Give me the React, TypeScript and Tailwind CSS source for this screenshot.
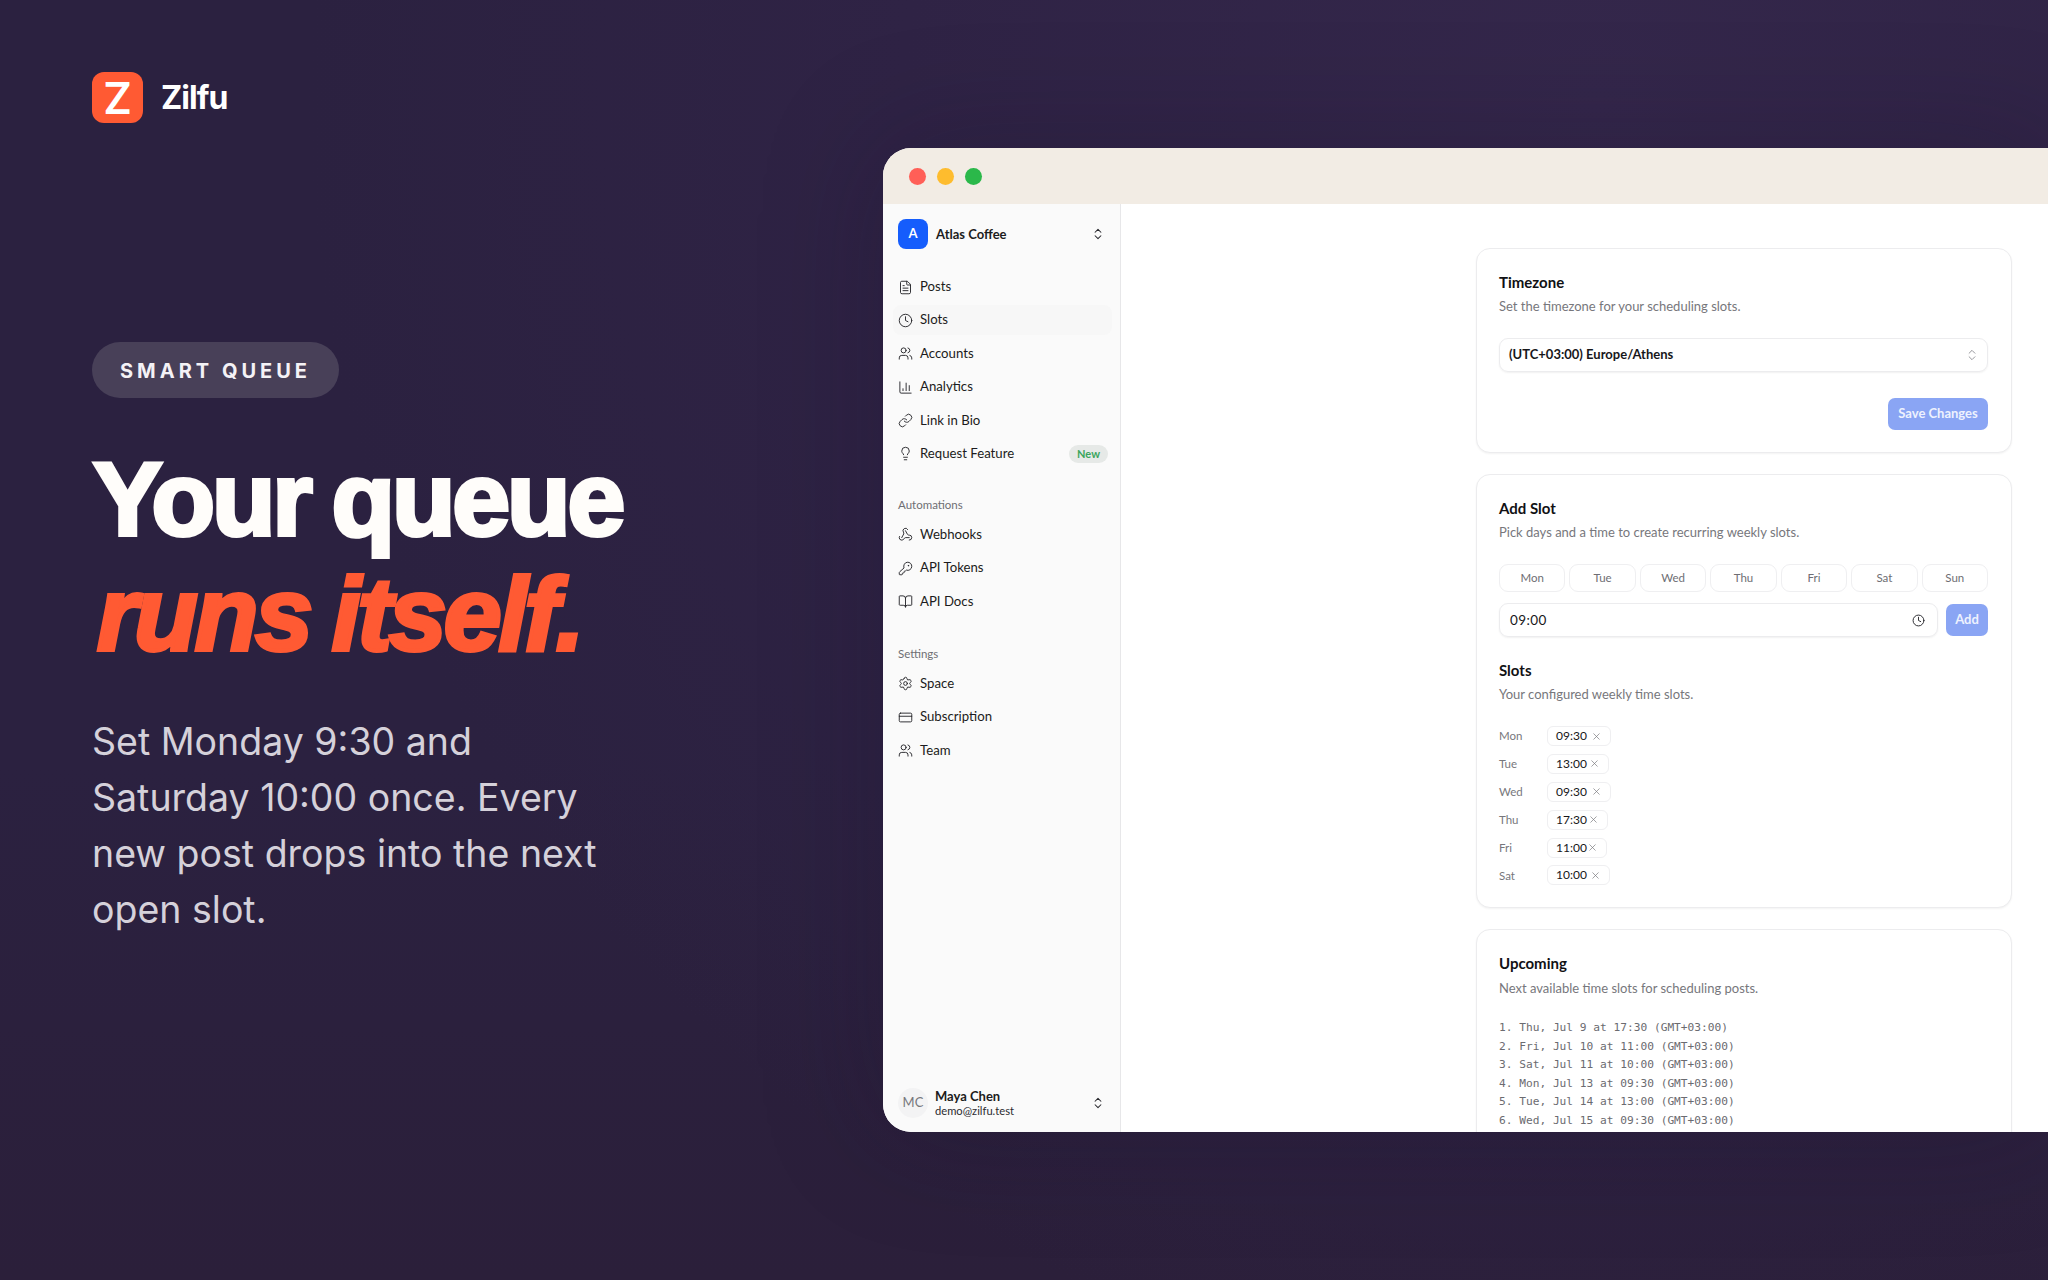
import { BookOpen, ChartColumn, ChevronsUpDown, Clock, CreditCard, FileText, KeyRound, Lightbulb, Link as LinkIcon, Settings, Users, Webhook, X } from "lucide-react";
import type { ComponentType, ReactNode } from "react";

type IconT = ComponentType<{ className?: string; strokeWidth?: number }>;

function NavRow({ icon: Icon, label, active, badge }: { icon: IconT; label: string; active?: boolean; badge?: string }) {
  return (
    <div className={`flex h-[30px] items-center rounded-lg pl-[5px] pr-[4px] ${active ? "bg-[#f7f7f7]" : ""}`}>
      <Icon className="mr-[7px] size-[15px] shrink-0 text-[#26262b]" strokeWidth={1.5} />
      <span className="text-[13.2px] text-[#1c1c20]">{label}</span>
      {badge && (
        <span className="ml-auto flex h-[18px] items-center rounded-full bg-[#e6e9e7] px-[8px] text-[11px] font-bold text-[#3ba55d]">{badge}</span>
      )}
    </div>
  );
}

function GroupLabel({ children }: { children: ReactNode }) {
  return <div className="mb-[7px] flex h-[16px] items-center pl-[5px] text-[11.5px] text-[#6e6e73]">{children}</div>;
}

function CardHead({ title, desc }: { title: string; desc: string }) {
  return (
    <>
      <div className="flex h-[20px] items-center pb-[2px] text-[15px] font-bold text-[#111114]">{title}</div>
      <div className="mt-[5px] flex h-[18px] items-center text-[13px] text-[#77777c]">{desc}</div>
    </>
  );
}

const days = ["Mon", "Tue", "Wed", "Thu", "Fri", "Sat", "Sun"];
const slots: [string, string, string][] = [
  ["Mon", "09:30", "w-[64px]"],
  ["Tue", "13:00", "w-[61.5px]"],
  ["Wed", "09:30", "w-[64px]"],
  ["Thu", "17:30", "w-[60.5px]"],
  ["Fri", "11:00", "w-[60px]"],
  ["Sat", "10:00", "w-[63px]"],
];
const upcoming = [
  "1. Thu, Jul 9 at 17:30 (GMT+03:00)",
  "2. Fri, Jul 10 at 11:00 (GMT+03:00)",
  "3. Sat, Jul 11 at 10:00 (GMT+03:00)",
  "4. Mon, Jul 13 at 09:30 (GMT+03:00)",
  "5. Tue, Jul 14 at 13:00 (GMT+03:00)",
  "6. Wed, Jul 15 at 09:30 (GMT+03:00)",
];

export default function App() {
  return (
    <div className="flex h-[1280px] w-[2048px] overflow-hidden bg-[#2b2140] bg-[radial-gradient(circle_at_78%_8%,#34274b_0%,#2f2345_35%,rgba(43,33,64,0)_65%),linear-gradient(180deg,#2b2140_0%,#2b2140_60%,#2b1f3a_100%)] font-['Lato',sans-serif]">
      {/* left column */}
      <div className="flex w-[883px] shrink-0 flex-col pl-[92px] pt-[72px]">
        <div className="flex items-center gap-[18px]">
          <div className="flex size-[51px] items-center justify-center rounded-[12px] bg-[#ff5a33] font-['Inter',sans-serif] text-[44px] font-semibold leading-none text-white">Z</div>
          <div className="font-['Inter',sans-serif] text-[32px] font-bold tracking-[-0.03em] text-white">Zilfu</div>
        </div>
        <div className="mt-[219px] flex h-[56px] w-[247px] items-center justify-center rounded-full bg-[#484058] pt-[2px] font-['Inter',sans-serif] text-[20px] font-bold tracking-[0.2em] text-[#f4f2f6]">SMART QUEUE</div>
        <h1 className="mt-[44px] pl-[1px] font-['Liberation_Sans',sans-serif] text-[104px] font-bold leading-[115px] tracking-[-0.03em] text-[#fffdfa] [word-spacing:-4px] [-webkit-text-stroke:4px_currentColor]">
          <div>Your queue</div>
          <div className="pl-[4px] italic text-[#ff5a33]">runs itself.</div>
        </h1>
        <p className="mt-[42px] w-[600px] font-['Inter',sans-serif] text-[37.5px] leading-[56px] text-[#d5d1da]">
          Set Monday 9:30 and
          <br />
          Saturday 10:00 once. Every
          <br />
          new post drops into the next
          <br />
          open slot.
        </p>
      </div>

      {/* app window */}
      <div className="mt-[148px] flex h-[984px] flex-1 flex-col overflow-hidden rounded-l-[28px] bg-white shadow-[0_0_120px_rgba(20,12,35,0.25)]">
        <div className="flex h-[56px] shrink-0 items-center gap-[11px] bg-[#f2ece4] pl-[26px]">
          <span className="size-[17px] rounded-full bg-[#ff5f57]" />
          <span className="size-[17px] rounded-full bg-[#febc2e]" />
          <span className="size-[17px] rounded-full bg-[#2bb84a]" />
        </div>
        <div className="flex min-h-0 flex-1">
          {/* sidebar */}
          <div className="flex w-[238px] shrink-0 flex-col border-r border-[#e7e7e9] bg-[#fafafa] pb-[14px] pl-[10px] pr-[8px] pt-[15px]">
            <div className="flex items-center pl-[5px] pr-[6px]">
              <div className="flex size-[30px] items-center justify-center rounded-[8px] bg-[#155dfc] text-[13px] font-bold text-white">A</div>
              <div className="ml-[8px] pt-[2px] text-[13px] font-bold text-[#1c1c20]">Atlas Coffee</div>
              <ChevronsUpDown className="ml-auto mr-[1px] size-[14px] text-[#26262b]" strokeWidth={1.75} />
            </div>
            <div className="mt-[23px] flex flex-col gap-[3.4px]">
              <NavRow icon={FileText} label="Posts" />
              <NavRow icon={Clock} label="Slots" active />
              <NavRow icon={Users} label="Accounts" />
              <NavRow icon={ChartColumn} label="Analytics" />
              <NavRow icon={LinkIcon} label="Link in Bio" />
              <NavRow icon={Lightbulb} label="Request Feature" badge="New" />
            </div>
            <div className="mt-[28px]"><GroupLabel>Automations</GroupLabel></div>
            <div className="flex flex-col gap-[3.4px]">
              <NavRow icon={Webhook} label="Webhooks" />
              <NavRow icon={KeyRound} label="API Tokens" />
              <NavRow icon={BookOpen} label="API Docs" />
            </div>
            <div className="mt-[29px]"><GroupLabel>Settings</GroupLabel></div>
            <div className="flex flex-col gap-[3.4px]">
              <NavRow icon={Settings} label="Space" />
              <NavRow icon={CreditCard} label="Subscription" />
              <NavRow icon={Users} label="Team" />
            </div>
            <div className="mt-auto flex items-center pl-[5px] pr-[6px]">
              <div className="flex size-[30px] items-center justify-center rounded-full bg-[#f3f3f4] text-[13px] text-[#77777c]">MC</div>
              <div className="ml-[7px] flex flex-col">
                <span className="text-[13px] font-bold leading-[16px] text-[#1c1c20]">Maya Chen</span>
                <span className="text-[11.2px] leading-[14px] text-[#2b2b30]">demo@zilfu.test</span>
              </div>
              <ChevronsUpDown className="ml-auto mr-[1px] size-[14px] text-[#26262b]" strokeWidth={1.75} />
            </div>
          </div>

          {/* main */}
          <div className="flex min-w-0 flex-1 flex-col items-end gap-[21px] overflow-hidden pr-[36px] pt-[44px]">
            <section className="w-[536px] shrink-0 rounded-[14px] border border-[#ececee] bg-white pb-[22px] pl-[22px] pr-[23px] pt-[24px] shadow-[0_1px_2px_rgba(0,0,0,0.05)]">
              <CardHead title="Timezone" desc="Set the timezone for your scheduling slots." />
              <div className="mt-[22px] flex h-[34px] items-center rounded-[9px] border border-[#ececee] pl-[9px] pr-[8px] text-[13px] font-bold text-[#17171a] shadow-[0_1px_2px_rgba(0,0,0,0.06)]">
                (UTC+03:00) Europe/Athens
                <ChevronsUpDown className="ml-auto size-[14px] text-[#8a8a8f]" strokeWidth={1.5} />
              </div>
              <div className="mt-[26px] flex justify-end">
                <div className="flex h-[32px] w-[100px] items-center justify-center rounded-[7px] bg-[#8aa5f4] text-[13px] font-bold text-[#eef2fe]">Save Changes</div>
              </div>
            </section>

            <section className="w-[536px] shrink-0 rounded-[14px] border border-[#ececee] bg-white pb-[22px] pl-[22px] pr-[23px] pt-[24px] shadow-[0_1px_2px_rgba(0,0,0,0.05)]">
              <CardHead title="Add Slot" desc="Pick days and a time to create recurring weekly slots." />
              <div className="mt-[22px] grid grid-cols-7 gap-[4px]">
                {days.map((d) => (
                  <div key={d} className="flex h-[28px] items-center justify-center rounded-[9px] border border-[#efeff1] text-[11.5px] text-[#6e6e73]">{d}</div>
                ))}
              </div>
              <div className="mt-[11px] flex items-center gap-[8px]">
                <div className="flex h-[34px] flex-1 items-center rounded-[9px] border border-[#ececee] pl-[10px] pr-[12px] text-[13.5px] tracking-[0.03em] text-[#17171a] shadow-[0_1px_2px_rgba(0,0,0,0.06)]">
                  09:00
                  <Clock className="ml-auto size-[13px] text-[#26262b]" strokeWidth={1.75} />
                </div>
                <div className="flex h-[32px] w-[42px] items-center justify-center rounded-[7px] bg-[#8aa5f4] text-[13px] font-bold text-[#eef2fe]">Add</div>
              </div>
              <div className="mt-[24px]"><CardHead title="Slots" desc="Your configured weekly time slots." /></div>
              <div className="mt-[22px] flex flex-col gap-[7.9px]">
                {slots.map(([d, t, w]) => (
                  <div key={d} className="flex h-[20px] items-center">
                    <span className="w-[48px] text-[11.5px] text-[#77777c]">{d}</span>
                    <span className={`flex h-[20px] items-center rounded-[6px] border border-[#efeff1] pl-[8px] text-[12px] text-[#17171a] ${w}`}>
                      {t}
                      <X className="ml-auto mr-[8px] size-[11px] text-[#77777c]" strokeWidth={1.5} />
                    </span>
                  </div>
                ))}
              </div>
            </section>

            <section className="w-[536px] shrink-0 rounded-[14px] border border-[#ececee] bg-white pb-[24px] pl-[22px] pr-[23px] pt-[24px] shadow-[0_1px_2px_rgba(0,0,0,0.05)]">
              <CardHead title="Upcoming" desc="Next available time slots for scheduling posts." />
              <div className="mt-[22px] flex flex-col font-['DejaVu_Sans_Mono',monospace] text-[11.2px] leading-[18.5px] text-[#6b6b70]">
                {upcoming.map((u) => (
                  <div key={u}>{u}</div>
                ))}
              </div>
            </section>
          </div>
        </div>
      </div>
    </div>
  );
}
